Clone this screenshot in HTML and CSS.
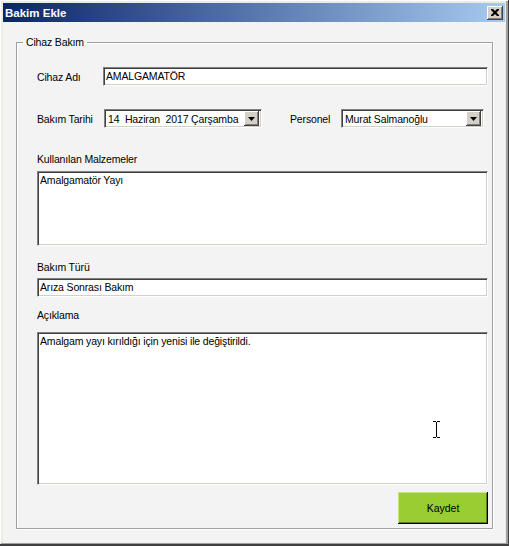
FILE: index.html
```html
<!DOCTYPE html>
<html>
<head>
    <title>Bakim Ekle</title>
    <link rel="stylesheet" href="styles.css">
</head>
<body>
    <div class="window">
        <div class="titlebar">
            <span class="title">Bakim Ekle</span>
            <span class="close">
                <svg width="8" height="7" viewBox="0 0 8 7">
                    <path d="M0 0h2l2 2 2-2h2v1L5.5 3.5 8 6v1H6L4 5 2 7H0V6l2.5-2.5L0 1z" fill="#000"/>
                </svg>
            </span>
        </div>
        <div class="client">
            <fieldset class="group">
                <legend>Cihaz Bakım</legend>
                <div class="group-body">
                    <div class="row row-first">
                        <label class="lbl lbl-cihaz">Cihaz Adı</label>
                        <div class="field field-grow">AMALGAMATÖR</div>
                    </div>
                    <div class="row row-date">
                        <label class="lbl lbl-tarih">Bakım Tarihi</label>
                        <div class="combo combo-date">
                            <span class="combo-text">14  Haziran  2017 Çarşamba</span>
                            <span class="combo-btn">
                                <svg width="7" height="4" viewBox="0 0 7 4"><path d="M0 0h7L3.5 4z" fill="#000"/></svg>
                            </span>
                        </div>
                        <label class="lbl lbl-personel">Personel</label>
                        <div class="combo combo-personel">
                            <span class="combo-text">Murat Salmanoğlu</span>
                            <span class="combo-btn">
                                <svg width="7" height="4" viewBox="0 0 7 4"><path d="M0 0h7L3.5 4z" fill="#000"/></svg>
                            </span>
                        </div>
                    </div>
                    <label class="caption caption-malzeme">Kullanılan Malzemeler</label>
                    <div class="field memo memo-malzeme">Amalgamatör Yayı</div>
                    <label class="caption caption-tur">Bakım Türü</label>
                    <div class="field field-tur">Arıza Sonrası Bakım</div>
                    <label class="caption caption-aciklama">Açıklama</label>
                    <div class="field memo memo-aciklama">Amalgam yayı kırıldığı için yenisi ile değiştirildi.</div>
                    <div class="actions">
                        <button class="btn-kaydet">Kaydet</button>
                    </div>
                </div>
            </fieldset>
            <svg class="cursor" width="9" height="17" viewBox="0 0 9 17">
                <path d="M1 0.5h3M5 0.5h3M4.5 1v15M1 16.5h3M5 16.5h3" stroke="#000" fill="none"/>
            </svg>
        </div>
    </div>
</body>
</html>
```

FILE: styles.css
```css
body {
    margin: 0;
    background: #f3f3f3;
    font-family: "Liberation Sans", Arial, sans-serif;
    font-size: 10.5px;
    letter-spacing: -0.15px;
    color: #000;
}
.window {
    position: relative;
    width: 509px;
    height: 546px;
    box-sizing: border-box;
    padding: 3px 4px 3px 3px;
    background: #ecebe6;
    box-shadow: inset -1px -2px #404040, inset 1px 1px #fff, inset -3px -3px #a0a0a0;
}
.titlebar {
    height: 19px;
    display: flex;
    align-items: center;
    justify-content: space-between;
    padding: 0 2px 0 2px;
    background: linear-gradient(to right, #0a246a, #a6caf0);
}
.title {
    color: #fff;
    font-weight: bold;
    font-size: 11.5px;
    letter-spacing: 0;
}
.close {
    width: 16px;
    height: 14px;
    box-sizing: border-box;
    display: flex;
    align-items: center;
    justify-content: center;
    background: #d4d0c8;
    box-shadow: inset -1px -1px #404040, inset 1px 1px #fff, inset -2px -2px #808080;
}
.client {
    position: relative;
    height: 521px;
    box-sizing: border-box;
    padding: 13px 12px 0 13px;
    background: #f3f3f3;
}
.group {
    margin: 0;
    padding: 0;
    border: 1px solid #a0a0a0;
    box-shadow: 1px 1px #fff, inset 1px 1px #fff;
}
.group legend {
    margin-left: 6px;
    padding: 0 3px;
    line-height: 14px;
}
.group-body {
    padding: 18px 4px 4px 20px;
    display: flex;
    flex-direction: column;
}
.row {
    display: flex;
    align-items: center;
    height: 19px;
}
.row-date {
    margin-top: 23px;
}
.lbl {
    flex: none;
}
.lbl-cihaz {
    width: 66px;
}
.lbl-tarih {
    width: 67px;
}
.lbl-personel {
    width: 51px;
    margin-left: 28px;
}
.field {
    background: #fff;
    box-sizing: border-box;
    border-top: 1px solid #808080;
    border-left: 1px solid #808080;
    border-right: 1px solid #fff;
    border-bottom: 1px solid #fff;
    box-shadow: inset 1px 1px #404040, inset -1px -1px #d4d0c8;
    padding: 0 2px;
    line-height: 17px;
    white-space: pre;
}
.field-grow {
    flex: 1;
    height: 19px;
}
.field-tur {
    height: 19px;
    margin-top: 4px;
}
.combo {
    display: flex;
    align-items: center;
    height: 19px;
    box-sizing: border-box;
    background: #fff;
    border-top: 1px solid #808080;
    border-left: 1px solid #808080;
    border-right: 1px solid #fff;
    border-bottom: 1px solid #fff;
    box-shadow: inset 1px 1px #404040, inset -1px -1px #d4d0c8;
    padding: 2px 2px 2px 3px;
}
.combo-date {
    width: 158px;
}
.combo-personel {
    width: 143px;
}
.combo-text {
    flex: 1;
    white-space: pre;
}
.combo-btn {
    width: 15px;
    height: 15px;
    box-sizing: border-box;
    display: flex;
    align-items: center;
    justify-content: center;
    background: #d4d0c8;
    box-shadow: inset -1px -1px #404040, inset 1px 1px #fff, inset -2px -2px #808080;
}
.caption {
    line-height: 13px;
}
.caption-malzeme {
    margin-top: 25px;
}
.caption-tur {
    margin-top: 15px;
}
.caption-aciklama {
    margin-top: 12px;
}
.memo {
    line-height: 13px;
    padding-top: 2px;
    white-space: normal;
}
.memo-malzeme {
    margin-top: 5px;
    height: 75px;
}
.memo-aciklama {
    margin-top: 10px;
    height: 153px;
}
.actions {
    display: flex;
    justify-content: flex-end;
    margin-top: 7px;
}
.btn-kaydet {
    width: 90px;
    height: 32px;
    font: inherit;
    color: #000;
    background: #9acd32;
    border: none;
    box-shadow: inset -1px -1px #000, inset 1px 1px #c4e67a, inset -2px -2px #5c7d1c;
}
.cursor {
    position: absolute;
    left: 429px;
    top: 399px;
}
```
